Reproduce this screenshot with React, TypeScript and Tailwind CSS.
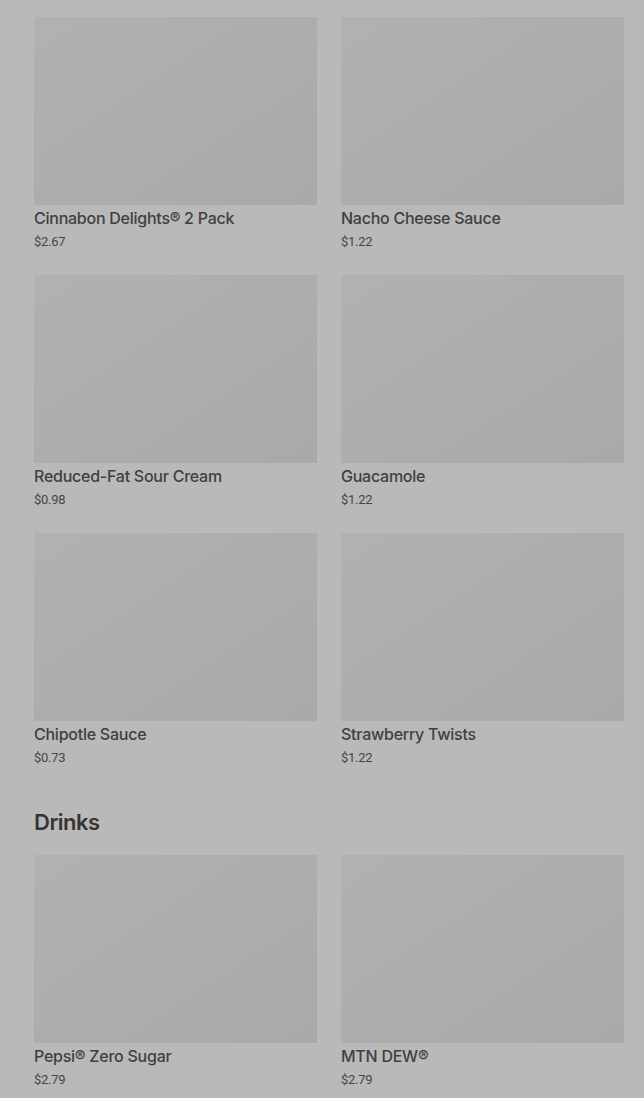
import React from 'react'

type Item = { name: string; price: string }

const sides: Item[] = [
    { name: 'Cinnabon Delights® 2 Pack', price: '$2.67' },
    { name: 'Nacho Cheese Sauce', price: '$1.22' },
    { name: 'Reduced-Fat Sour Cream', price: '$0.98' },
    { name: 'Guacamole', price: '$1.22' },
    { name: 'Chipotle Sauce', price: '$0.73' },
    { name: 'Strawberry Twists', price: '$1.22' },
]

const drinks: Item[] = [
    { name: 'Pepsi® Zero Sugar', price: '$2.79' },
    { name: 'MTN DEW®', price: '$2.79' },
]

const Card = ({ item }: { item: Item }) => (
    <div className="flex flex-col">
        <div className="h-[188px] w-full bg-gradient-to-br from-[#b1b1b1] to-[#a9a9a9]" />
        <div className="text-[16px] leading-[27px] font-medium tracking-[-0.25px] text-[#404040]">
            {item.name}
        </div>
        <div className="text-[13px] leading-[19px] text-[#454545] font-['Roboto',sans-serif] tracking-[-0.3px]">
            {item.price}
        </div>
    </div>
)

const App = () => {
    return (
        <div className="min-h-[1098px] bg-[#b9b9b9] pl-[34px] pr-[20px] pt-[17px] font-['Inter',sans-serif]">
            <div className="grid grid-cols-2 gap-x-[24px] gap-y-[24px]">
                {sides.map((item) => (
                    <Card key={item.name} item={item} />
                ))}
            </div>
            <h2 className="mt-[41px] mb-[19px] text-[22px] leading-7 font-semibold tracking-[-0.5px] text-[#353535]">
                Drinks
            </h2>
            <div className="grid grid-cols-2 gap-x-[24px] gap-y-[24px]">
                {drinks.map((item) => (
                    <Card key={item.name} item={item} />
                ))}
            </div>
        </div>
    )
}

export default App
